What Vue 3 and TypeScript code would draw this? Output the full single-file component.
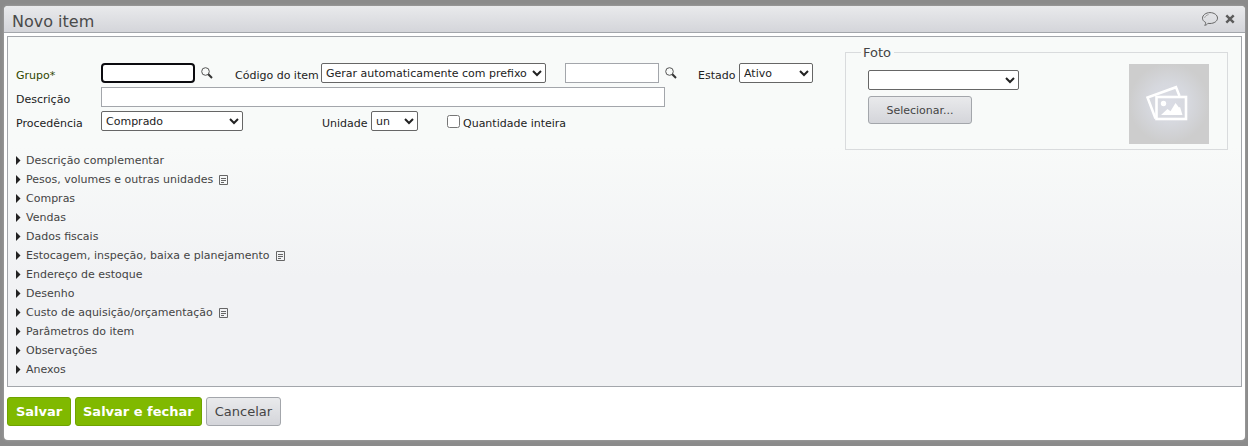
<script setup lang="ts">
import { ref } from 'vue'

interface Section {
  title: string
  note?: boolean
}

const group = ref('')
const prefix = ref('')
const description = ref('')
const wholeQuantity = ref(false)

const sections: Section[] = [
  { title: 'Descrição complementar' },
  { title: 'Pesos, volumes e outras unidades', note: true },
  { title: 'Compras' },
  { title: 'Vendas' },
  { title: 'Dados fiscais' },
  { title: 'Estocagem, inspeção, baixa e planejamento', note: true },
  { title: 'Endereço de estoque' },
  { title: 'Desenho' },
  { title: 'Custo de aquisição/orçamentação', note: true },
  { title: 'Parâmetros do item' },
  { title: 'Observações' },
  { title: 'Anexos' },
]
</script>

<template>
  <div class="backdrop">
    <main class="dialog">
      <header class="titlebar">
        <h1>Novo item</h1>
        <button class="icon-button" type="button" aria-label="Comentários">
          <svg width="16" height="14" viewBox="0 0 16 14" fill="none" stroke="#666" stroke-width="1">
            <path d="M3.6 10.4C1.6 9.4.5 7.900.5 6.200.5 3.100 3.900.6 8 .6s7.500 2.400 7.500 5.500-3.400 5.400-7.500 5.400c-.7 0-1.300 0-1.900-.2C5.200 12.500 4 13.200 2.700 13.300c.8-.9 1.100-1.800.9-2.900Z" />
            <path d="M2.600 5.800C3.200 4.200 4.700 3 6.600 2.600" stroke="#999" />
          </svg>
        </button>
        <button class="icon-button close" type="button" aria-label="Fechar">
          <svg width="10" height="10" viewBox="0 0 10 10" stroke="#5c5c5c" stroke-width="2.400">
            <path d="M1.300 1.300l7.400 7.400M8.700 1.300L1.300 8.700" />
          </svg>
        </button>
      </header>

      <form class="content" @submit.prevent>
        <div class="panel">
          <div class="top">
            <div class="fields">
              <div class="row">
                <label class="lead required" for="group">Grupo*</label>
                <input id="group" v-model="group" class="code focused" type="text" />
                <button class="icon-button search" type="button" aria-label="Pesquisar grupo">
                  <svg width="12" height="12" viewBox="0 0 12 12" fill="none">
                    <circle cx="4.500" cy="4.500" r="3.800" stroke="#555" />
                    <path d="M7.300 7.300l3.700 3.700" stroke="#333" stroke-width="2" />
                  </svg>
                </button>
                <label class="code-label" for="mode">Código do item</label>
                <select id="mode" class="mode">
                  <option>Gerar automaticamente com prefixo</option>
                </select>
                <input v-model="prefix" class="code prefix" type="text" aria-label="Prefixo" />
                <button class="icon-button search" type="button" aria-label="Pesquisar prefixo">
                  <svg width="12" height="12" viewBox="0 0 12 12" fill="none">
                    <circle cx="4.500" cy="4.500" r="3.800" stroke="#555" />
                    <path d="M7.300 7.300l3.700 3.700" stroke="#333" stroke-width="2" />
                  </svg>
                </button>
                <label class="state-label" for="state">Estado</label>
                <select id="state" class="state">
                  <option>Ativo</option>
                </select>
              </div>
              <div class="row">
                <label class="lead" for="description">Descrição</label>
                <input id="description" v-model="description" class="description" type="text" />
              </div>
              <div class="row">
                <label class="lead" for="origin">Procedência</label>
                <select id="origin" class="origin">
                  <option>Comprado</option>
                </select>
                <label class="unit-label" for="unit">Unidade</label>
                <select id="unit" class="unit">
                  <option>un</option>
                </select>
                <input id="whole" v-model="wholeQuantity" class="check" type="checkbox" />
                <label for="whole">Quantidade inteira</label>
              </div>
            </div>

            <fieldset class="photo">
              <legend>Foto</legend>
              <div class="photo-body">
                <div class="photo-controls">
                  <select class="photo-select" aria-label="Foto">
                    <option></option>
                  </select>
                  <button class="button small" type="button">Selecionar...</button>
                </div>
                <svg class="preview" width="80" height="80" viewBox="0 0 80 80" role="img" aria-label="Sem foto">
                  <defs>
                    <radialGradient id="glow" cx="50%" cy="49%" r="50%">
                      <stop offset="0" stop-color="#dadce5" />
                      <stop offset="0.500" stop-color="#d6d8de" />
                      <stop offset="1" stop-color="#cdcdcd" />
                    </radialGradient>
                  </defs>
                  <rect width="80" height="80" fill="url(#glow)" />
                  <path d="M26.500 54.500L18.500 33.500 47 23.200 50.500 32" fill="none" stroke="#fff" stroke-width="2.500" />
                  <rect x="27.500" y="33" width="29.500" height="22" fill="none" stroke="#fff" stroke-width="2.600" />
                  <circle cx="34.500" cy="39.500" r="2.700" fill="#fff" />
                  <path d="M32 51l6.500-6 3 2.200L46.500 39l3.500 4.500 1-.5 2.500 8Z" fill="#fff" />
                </svg>
              </div>
            </fieldset>
          </div>

          <ul class="sections">
            <li v-for="section in sections" :key="section.title">
              <button class="section" type="button" aria-expanded="false">
                <svg class="arrow" width="5" height="9" viewBox="0 0 5 9">
                  <path d="M0 0l4.500 4.500L0 9Z" fill="#222" />
                </svg>
                <span>{{ section.title }}</span>
                <svg v-if="section.note" class="note" width="10" height="11" viewBox="0 0 10 11" fill="none" stroke="#666">
                  <path d="M.5.5h8v9h-8Z" />
                  <path d="M2 3.500h5M2 5.500h5M2 7.500h3" />
                </svg>
              </button>
            </li>
          </ul>
        </div>

        <footer class="actions">
          <button class="button primary" type="submit">Salvar</button>
          <button class="button primary" type="button">Salvar e fechar</button>
          <button class="button" type="button">Cancelar</button>
        </footer>
      </form>
    </main>
  </div>
</template>

<style>
body {
  background: #8b8b8b;
}
</style>

<style scoped>
.backdrop,
.backdrop * {
  box-sizing: border-box;
}

.backdrop {
  min-height: 100vh;
  display: flex;
  padding: 6px 3px 6px 4px;
  background: #8b8b8b;
  font: 11px/14px Verdana, "DejaVu Sans", sans-serif;
  color: #222;
}

.dialog {
  flex: 1;
  display: flex;
  flex-direction: column;
  border-radius: 4px;
  overflow: hidden;
  background: #fff;
  box-shadow: 0 0 3px #a8a8a8;
}

.titlebar {
  display: flex;
  align-items: center;
  gap: 7px;
  height: 27px;
  padding: 0 10px 0 8px;
  border-bottom: 1px solid #a3a6ab;
  background: linear-gradient(#e9eaec, #d4d5da);
}

h1 {
  flex: 1;
  margin: 0;
  padding-top: 6px;
  font-size: 16px;
  line-height: 20px;
  font-weight: 400;
  color: #4a4a4a;
}

.icon-button {
  display: flex;
  padding: 0;
  border: 0;
  background: none;
}

.content {
  padding: 3px;
}

.panel {
  padding: 15px 13px 7px 8px;
  border: 1px solid #a3a6ab;
  background: linear-gradient(#f8faf9 110px, #f1f2f4 240px);
}

.top {
  display: flex;
  justify-content: space-between;
  align-items: flex-start;
}

.fields {
  display: flex;
  flex-direction: column;
  gap: 4px;
  padding-top: 11px;
}

.row {
  display: flex;
  align-items: center;
  height: 20px;
}

label {
  padding-top: 5px;
  white-space: nowrap;
}

.lead {
  width: 85px;
}

.required {
  color: #2f4600;
}

input,
select {
  margin: 0;
  font: inherit;
  color: #222;
}

input[type="text"] {
  height: 20px;
  padding: 1px 3px;
  border: 1px solid #a3a6ab;
  background: #fff;
}

select {
  height: 20px;
  padding: 0;
  border: 1px solid #666;
  border-radius: 2px;
  background: #fff;
}

input.code {
  width: 94px;
}

input.focused {
  border: 2px solid #0b0b0f;
  border-radius: 4px;
  outline: none;
}

.search {
  width: 12px;
  margin-left: 6px;
}

.code-label {
  width: 86px;
  margin-left: 22px;
}

.mode {
  width: 225px;
}

.prefix {
  margin-left: 19px;
}

.state-label {
  width: 41px;
  margin-left: 21px;
}

.state {
  width: 74px;
}

.description {
  width: 564px;
}

.origin {
  width: 142px;
}

.unit-label {
  width: 49px;
  margin-left: 79px;
}

.unit {
  width: 47px;
}

.check {
  width: 13px;
  height: 13px;
  margin: 0 3px 0 29px;
}

.photo {
  width: 383px;
  min-width: 0;
  margin: 0;
  padding: 0 18px 5px 22px;
  border: 1px solid #d9dbdd;
}

.photo legend {
  margin-left: -7px;
  padding: 0 3px 0 2px;
  font-size: 13px;
  line-height: 1px;
  color: #444;
}

.photo-body {
  display: flex;
  justify-content: space-between;
  padding-top: 11px;
}

.photo-controls {
  display: flex;
  flex-direction: column;
  align-items: flex-start;
  gap: 6px;
  padding-top: 6px;
}

.photo-select {
  width: 151px;
}

.button {
  height: 29px;
  padding: 0 8px;
  border: 1px solid #a3a6ab;
  border-radius: 3px;
  background: linear-gradient(#e9eaec, #d4d5da);
  font: 13px/16px Verdana, "DejaVu Sans", sans-serif;
  color: #444;
}

.small {
  width: 104px;
  height: 28px;
  padding-top: 2px;
  font-size: 11px;
}

.primary {
  min-width: 64px;
  padding: 0 7px;
  border-color: #6fa300;
  background: #80b900;
  font-weight: 700;
  color: #fff;
}

.sections {
  margin: 0;
  padding: 1px 0 0;
  list-style: none;
}

.section {
  display: flex;
  align-items: center;
  height: 19px;
  padding: 0;
  border: 0;
  background: none;
  font: inherit;
  color: #444;
}

.arrow {
  margin-right: 5px;
}

.note {
  margin: 2px 0 0 6px;
}

.actions {
  display: flex;
  gap: 4px;
  padding-top: 10px;
}
</style>
